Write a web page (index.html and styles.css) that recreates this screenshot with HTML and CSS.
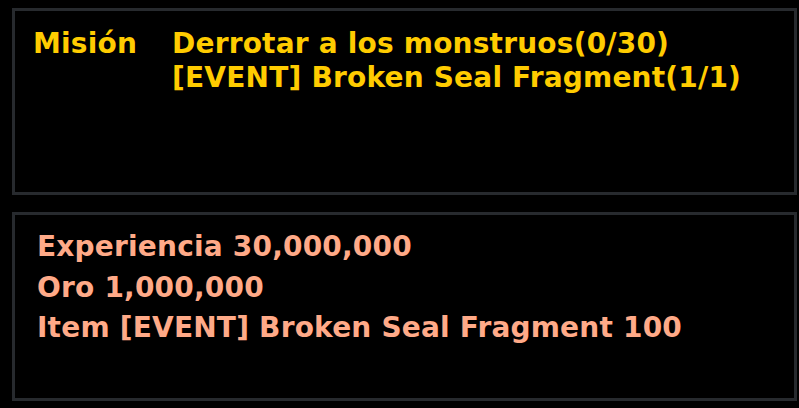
FILE: index.html
```html
<!DOCTYPE html>
<html>
<head>
<meta charset="utf-8">
<link rel="stylesheet" href="styles.css">
</head>
<body>
<div class="page">
  <div class="panel quest">
    <div class="label">Misión</div>
    <div class="lines">
      <div class="line">Derrotar a los monstruos(0/30)</div>
      <div class="line">[EVENT] Broken Seal Fragment(1/1)</div>
    </div>
  </div>
  <div class="panel reward">
    <div class="rline">Experiencia 30,000,000</div>
    <div class="rline">Oro 1,000,000</div>
    <div class="rline">Item [EVENT] Broken Seal Fragment 100</div>
  </div>
</div>
</body>
</html>
```
FILE: styles.css
```css
html, body {
  margin: 0;
  background: #000;
}
.page {
  width: 799px;
  height: 408px;
  padding: 8px 2px 0 12px;
  box-sizing: border-box;
  display: flex;
  flex-direction: column;
  gap: 17px;
  font-family: "DejaVu Sans", sans-serif;
  font-weight: bold;
  font-size: 28px;
  letter-spacing: 0.2px;
}
.panel {
  border: 3px solid #272a2e;
  background: #000;
  box-sizing: border-box;
}
.quest {
  height: 187px;
  display: flex;
  padding: 16px 0 0 18px;
  color: #ffcc00;
  line-height: 34px;
}
.label {
  width: 139px;
}
.reward {
  height: 189px;
  padding: 12px 0 0 22px;
  color: #ffaa88;
  line-height: 40.5px;
}
```
